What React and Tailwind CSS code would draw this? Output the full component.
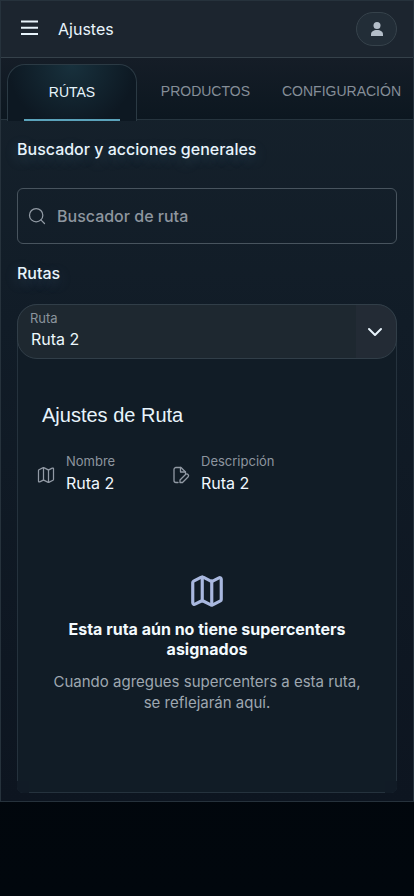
import { ChevronDown, Map, Search } from "lucide-react";

const tabs = ["PRODUCTOS", "CONFIGURACIÓN"];

function FilePencil() {
  return (
    <svg viewBox="0 0 20 20" className="size-5 shrink-0" fill="none" stroke="currentColor" strokeWidth="1.3" strokeLinecap="round" strokeLinejoin="round" aria-hidden="true">
      <path d="M7 17.500H5A2 2 0 0 1 3 15.500V4.500a2 2 0 0 1 2-2h5L14.500 7v1.500" />
      <path d="M9.500 2.500V7H14.500" />
      <path d="M9 17.500v-2.500l5.500-5.500a1.750 1.750 0 0 1 2.500 2.500l-5.500 5.500z" />
    </svg>
  );
}

function Detail({ icon, label, value }) {
  return (
    <div className="flex flex-1 items-center gap-2.5">
      <span className="pt-1 text-[#929aa5]">{icon}</span>
      <dl>
        <dt className="text-[13px] leading-5 text-[#8d959f]">{label}</dt>
        <dd className="text-base leading-6 text-[#f1f8ff]">{value}</dd>
      </dl>
    </div>
  );
}

export default function App() {
  return (
    <div className="min-h-screen bg-linear-to-b from-[#010509] to-[#01070d] font-[Inter,sans-serif] text-[#e8f4fc]">
      <div className="border border-[#26323c] bg-linear-to-b from-[#17232d] via-[#111c27] via-40% to-[#0d1520]">
        <header className="flex h-[57px] items-center border-b border-[#35414a] bg-[#1c252f] px-4">
          <button type="button" aria-label="Abrir menú" className="flex size-6 items-center justify-center">
            <svg viewBox="0 0 24 24" className="size-6" stroke="currentColor" strokeWidth="2.2" aria-hidden="true">
              <path d="M4 4.500h17M4 10.750h17M4 17h17" />
            </svg>
          </button>
          <h1 className="ml-[17px] flex-1 text-base leading-6">Ajustes</h1>
          <button type="button" aria-label="Perfil" className="flex h-[34px] w-[41px] items-center justify-center rounded-full border border-[#36424b] bg-[#222d37] text-[#b4bec9]">
            <svg viewBox="0 0 14 16" className="h-4 w-3.5" fill="currentColor" aria-hidden="true">
              <circle cx="7" cy="4.500" r="3.500" />
              <path d="M1 15v-1.500C1 10.500 3.500 9 7 9s6 1.500 6 4.500V15z" />
            </svg>
          </button>
        </header>

        <nav role="tablist" aria-label="Secciones" className="flex h-[62px] items-end border-b border-[#26343e] bg-linear-to-b from-[#151d27] to-[#0c1720] pl-1.5 font-['Liberation_Sans',sans-serif] text-sm">
          <button type="button" role="tab" aria-selected="true" className="-mb-0.5 flex h-[57px] w-[130px] shrink-0 flex-col items-center rounded-t-[18px] border border-b-0 border-[#2b3a44] bg-[radial-gradient(circle_at_50%_0%,#18313d,#0d1822_75%)] px-4 text-[#e6f4fb]">
            <span className="flex flex-1 items-center">RÚTAS</span>
            <span className="h-0.5 w-full bg-[#5ba3bb]" />
          </button>
          <div className="flex h-14 flex-1 items-center justify-end gap-8 pr-3 text-[#858e98]">
            {tabs.map((tab) => (
              <button key={tab} type="button" role="tab" aria-selected="false">{tab}</button>
            ))}
          </div>
        </nav>

        <main className="px-4 pt-[17px] pb-2">
          <h2 className="text-base leading-6 font-medium [text-shadow:0_4px_14px_#8ccbe540]">Buscador y acciones generales</h2>
          <label className="mt-[27px] flex h-14 items-center gap-2.5 rounded-md border border-[#48545e] px-[9px] text-[#929ba5]">
            <Search className="size-5 shrink-0" strokeWidth={1.5} />
            <input type="search" aria-label="Buscador de ruta" placeholder="Buscador de ruta" className="min-w-0 flex-1 bg-transparent font-medium outline-none placeholder:text-[#8e969f]" />
          </label>

          <h2 className="mt-[17px] text-base leading-6 font-medium [text-shadow:0_4px_14px_#8cb4e540]">Rutas</h2>
          <section className="relative mt-[19px] rounded-t-[20px] rounded-b-md border border-[#25323d] bg-[#111c26]">
            <div className="relative -m-px">
              <label htmlFor="ruta" className="pointer-events-none absolute top-1 left-[13px] text-[13px] leading-5 text-[#8b949d]">Ruta</label>
              <select id="ruta" className="h-[55px] w-full appearance-none rounded-[20px] border border-[#313e48] bg-[linear-gradient(to_left,#232b35_40px,#1e2830_40px)] px-[13px] pt-3.5 text-base text-[#edf8fd]">
                <option>Ruta 2</option>
              </select>
              <ChevronDown className="pointer-events-none absolute top-4 right-2.5 size-6" strokeWidth={2} />
            </div>

            <div className="px-[18px] pt-[43px] pb-[79px]">
              <h3 className="px-1.5 font-['Liberation_Sans',sans-serif] text-xl leading-7">Ajustes de Ruta</h3>
              <div className="mt-[22px] flex">
                <Detail icon={<Map className="size-5" strokeWidth={1.5} />} label="Nombre" value="Ruta 2" />
                <Detail icon={<FilePencil />} label="Descripción" value="Ruta 2" />
                <div className="w-[72px]" />
              </div>
              <div className="mt-[77px] flex flex-col items-center px-3 text-center">
                <Map className="size-[38px] text-[#a9b8df]" strokeWidth={2} />
                <h4 className="mt-[9px] text-base leading-5 font-bold text-[#f3fafe]">Esta ruta aún no tiene supercenters asignados</h4>
                <p className="mt-3 text-[15px] leading-[21px] text-[#9ea7b0]">Cuando agregues supercenters a esta ruta, se reflejarán aquí.</p>
              </div>
            </div>
            <span className="absolute -bottom-px -left-px size-3 rounded-bl-md bg-[#111b26]" />
            <span className="absolute -right-px -bottom-px size-3 rounded-br-md bg-[#111b26]" />
          </section>
        </main>
      </div>
    </div>
  );
}
